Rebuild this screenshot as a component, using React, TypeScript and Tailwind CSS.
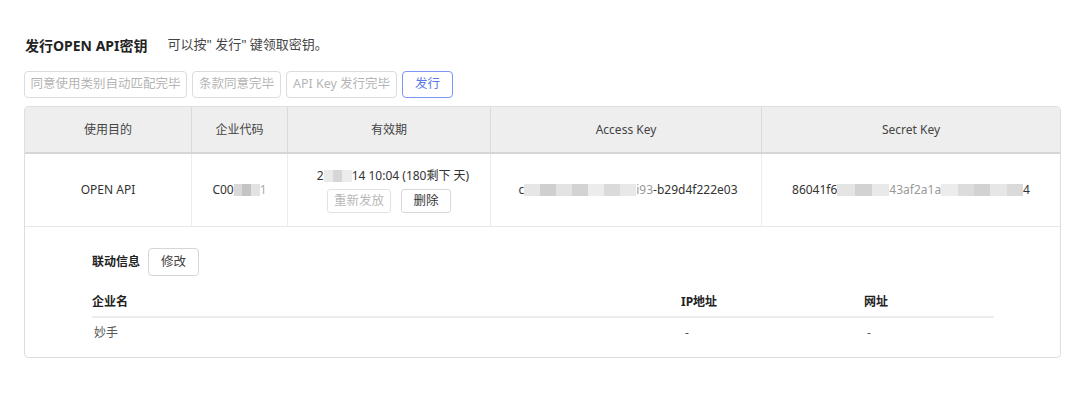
import React from "react";

const font = { fontFamily: "'Noto Sans', 'Noto Sans CJK SC', sans-serif" };

// mosaic stand-in for masked characters
function Mask({ w, shades }: { w: number; shades: string[] }) {
  return (
    <span className="inline-flex h-[12px] align-middle blur-[0.6px]" style={{ width: w }}>
      {shades.map((c, i) => (
        <span key={i} className="flex-1 h-full" style={{ background: c }} />
      ))}
    </span>
  );
}

function GhostBtn({ children, w }: { children: React.ReactNode; w: string }) {
  return (
    <button className={`h-[27px] ${w} rounded-[4px] border border-[#dcdcdc] bg-white text-[12.5px] text-[#b5b5b5]`}>
      {children}
    </button>
  );
}

export default function App() {
  return (
    <div className="w-[1080px] h-[409px] bg-white text-[#333] overflow-hidden" style={font}>
      <div className="pl-[24px] pt-[36px] w-[1061px]">
        <div className="flex items-center h-[18px]">
          <h1 className="text-[14px] font-bold text-[#222] ml-[1px]">发行OPEN API密钥</h1>
          <span className="ml-[20px] text-[13px] text-[#444]">可以按" 发行" 键领取密钥。</span>
        </div>

        <div className="flex gap-[5px] mt-[17px]">
          <GhostBtn w="w-[163px]">同意使用类别自动匹配完毕</GhostBtn>
          <GhostBtn w="w-[89px]">条款同意完毕</GhostBtn>
          <GhostBtn w="w-[111px]">API Key 发行完毕</GhostBtn>
          <button className="h-[27px] w-[51px] rounded-[4px] border border-[#7b98f2] bg-white text-[12.5px] text-[#5a78e6]">
            发行
          </button>
        </div>

        <div className="mt-[8px] border border-[#dedede] rounded-[4px] overflow-hidden">
          <div className="grid grid-cols-[167px_96px_203px_271px_1fr] bg-[#eeeeee] border-b-2 border-[#d6d6d6] h-[47px] text-[12px] text-[#444]">
            <div className="flex items-center justify-center border-r border-[#dadada]">使用目的</div>
            <div className="flex items-center justify-center border-r border-[#dadada]">企业代码</div>
            <div className="flex items-center justify-center border-r border-[#dadada]">有效期</div>
            <div className="flex items-center justify-center border-r border-[#dadada]">Access Key</div>
            <div className="flex items-center justify-center">Secret Key</div>
          </div>

          <div className="grid grid-cols-[167px_96px_203px_271px_1fr] h-[73px] text-[12px] text-[#333] border-b border-[#e8e8e8]">
            <div className="flex items-center justify-center border-r border-[#ececec]">OPEN API</div>
            <div className="flex items-center justify-center border-r border-[#ececec]">
              <span>C00</span>
              <Mask w={26} shades={["#d9d9d9", "#c4c4c4", "#e2e2e2"]} />
              <span className="text-[#aaa]">1</span>
            </div>
            <div className="flex flex-col items-center justify-center border-r border-[#ececec] pt-[2px]">
              <div className="flex items-center h-[14px] ml-[8px]">
                <span>2</span>
                <Mask w={28} shades={["#eaeaea", "#d6d6d6", "#ececec"]} />
                <span>14 10:04 (180剩下 天)</span>
              </div>
              <div className="flex gap-[10px] mt-[6px]">
                <button className="h-[24px] w-[64px] rounded-[3px] border border-[#e2e2e2] text-[12.5px] text-[#b8b8b8] bg-white">重新发放</button>
                <button className="h-[24px] w-[50px] rounded-[3px] border border-[#d8d8d8] text-[12.5px] text-[#333] bg-white">删除</button>
              </div>
            </div>
            <div className="flex items-center justify-center border-r border-[#ececec] pl-[4px]">
              <span>c</span>
              <Mask w={112} shades={["#e6e6e6", "#cfcfcf", "#e3e3e3", "#d3d3d3", "#ececec", "#dadada", "#e8e8e8"]} />
              <span className="text-[#999]">i93</span>
              <span>-b29d4f222e03</span>
            </div>
            <div className="flex items-center justify-center">
              <span>86041f6</span>
              <Mask w={52} shades={["#e4e4e4", "#d2d2d2", "#e9e9e9"]} />
              <span className="text-[#999]">43af2a1a</span>
              <Mask w={82} shades={["#ececec", "#dcdcdc", "#d2d2d2", "#e6e6e6", "#dadada"]} />
              <span>4</span>
            </div>
          </div>

          <div className="pl-[67px] pr-[66px] pt-[21px] pb-[9px]">
            <div className="flex items-center">
              <span className="text-[12px] font-bold text-[#222]">联动信息</span>
              <button className="ml-[8px] h-[28px] w-[51px] rounded-[4px] border border-[#d6d6d6] bg-white text-[12.5px] text-[#444]">修改</button>
            </div>
            <div className="grid grid-cols-[589px_183px_1fr] mt-[12px] h-[30px] items-center border-b-2 border-[#ececec] text-[12px] font-bold text-[#222]">
              <div>企业名</div>
              <div>IP地址</div>
              <div>网址</div>
            </div>
            <div className="grid grid-cols-[589px_183px_1fr] h-[30px] items-center text-[12px] text-[#555]">
              <div className="pl-[2px]">妙手</div>
              <div className="pl-[4px]">-</div>
              <div className="pl-[3px]">-</div>
            </div>
          </div>
        </div>
      </div>
    </div>
  );
}
